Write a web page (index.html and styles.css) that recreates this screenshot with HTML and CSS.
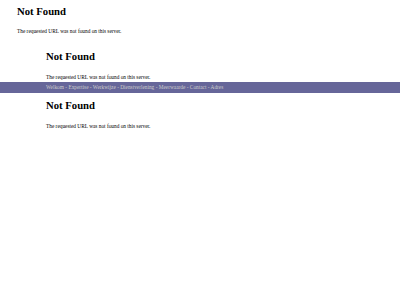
FILE: index.html
```html
<!DOCTYPE html>
<html lang="en">
<head>
  <meta charset="UTF-8">
  <title>404 Not Found</title>
  <link rel="stylesheet" href="styles.css">
</head>
<body>
  <div class="outer">
    <h1>Not Found</h1>
    <p>The requested URL was not found on this server.</p>
  </div>
  <div class="frame">
    <div class="inner">
      <h1>Not Found</h1>
      <p>The requested URL was not found on this server.</p>
    </div>
    <div class="menu">
      <div class="menu-links">
        <a href="#">Welkom</a> - <a href="#">Expertise</a> - <a href="#">Werkwijze</a> - <a href="#">Dienstverlening</a> - <a href="#">Meerwaarde</a> - <a href="#">Contact</a> - <a href="#">Adres</a>
      </div>
    </div>
    <div class="inner">
      <h1>Not Found</h1>
      <p>The requested URL was not found on this server.</p>
    </div>
  </div>
</body>
</html>
```

FILE: styles.css
```css
body {
  margin: 0;
  font-family: "Liberation Serif", "Times New Roman", serif;
  background-color: #fff;
  color: #000;
}
h1 {
  font-size: 10.7px;
  margin: 0;
}
p {
  font-size: 5.33px;
  margin: 0;
}
.outer {
  padding: 5px 0 0 17px;
}
.outer h1 {
  margin-bottom: 11px;
}
.frame {
  margin-top: 16px;
}
.inner {
  padding-left: 46px;
}
.inner h1 {
  margin-bottom: 12px;
}
.menu {
  background-color: #666699;
  margin-top: 2px;
  height: 11px;
  margin-bottom: 6px;
}
.menu-links {
  padding-left: 46px;
  font-size: 5.33px;
  line-height: 11px;
  color: #ccc;
}
.menu-links a {
  color: #ccc;
  text-decoration: none;
}
```
